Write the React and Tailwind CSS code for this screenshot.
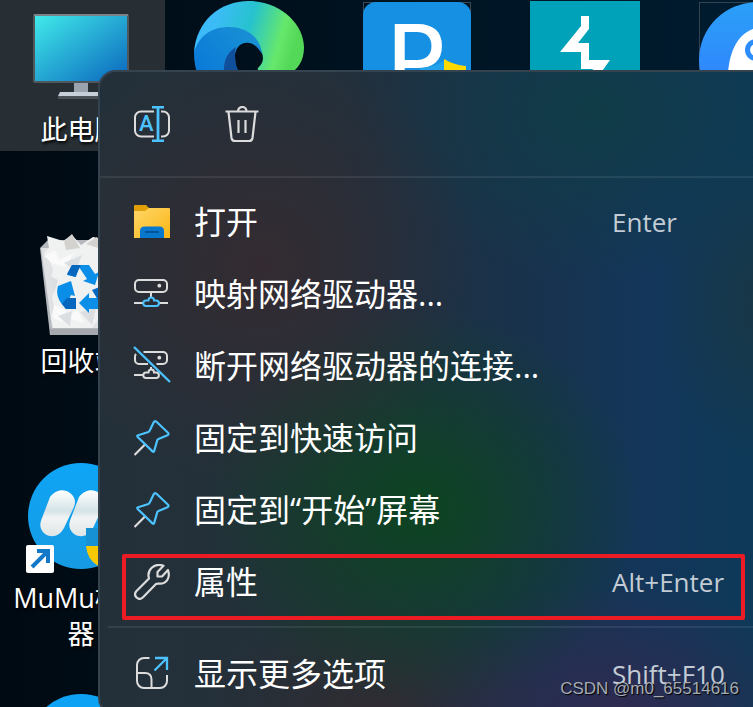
const light = "#dcdcdc";
const blue = "#4cc2ff";

const RenameIcon = () => (
  <svg viewBox="0 0 36 36" className="h-9 w-9" fill="none" strokeWidth="2">
    <path d="M20 5.5H7a6 6 0 0 0-6 6v13a6 6 0 0 0 6 6h13M27 5.5h2a6 6 0 0 1 6 6v13a6 6 0 0 1-6 6h-2" stroke={light} />
    <path d="M18 1h12M18 35h12M24 1v34" stroke={blue} strokeWidth="2.8" />
    <text x="5" y="25" fontSize="22" fill={blue} className="font-['Roboto',sans-serif] font-medium">A</text>
  </svg>
);

const TrashIcon = () => (
  <svg viewBox="0 0 36 36" className="h-9 w-9" fill="none" stroke={light} strokeWidth="2.2">
    <path d="M1.5 5.5h33M14 5.5c0-6 8.500-6 8.500 0M4.500 6l3 26c.3 2 1.500 3 3.500 3h14c2 0 3.200-1 3.500-3l3-26M14.500 14v13M21.500 14v13" />
  </svg>
);

const FolderIcon = () => (
  <svg viewBox="0 0 36 36" className="h-9 w-9">
    <defs>
      <linearGradient id="folder" x1="0" y1="0" x2="1" y2="1">
        <stop offset="0" stopColor="#ffd768" />
        <stop offset="1" stopColor="#fbb616" />
      </linearGradient>
    </defs>
    <path d="M0 2q0-1 1-1h11l3 3v6H0z" fill="#e09f08" />
    <path d="M0 7h11l4-3h20q1 0 1 1v29H0z" fill="url(#folder)" />
    <path d="M6 34v-7q0-4.500 4.500-4.500h15q4.500 0 4.500 4.500v7z" fill="#0878ce" />
    <path d="M11 28h14" stroke="#064a89" strokeWidth="1.6" />
  </svg>
);

const MapDriveIcon = ({ off }) => (
  <svg viewBox="0 0 36 36" className="h-9 w-9 overflow-visible" fill="none" stroke={light} strokeWidth="2">
    {off ? (
      <path d="M9.500 4H29a4 4 0 0 1 4 4v4a4 4 0 0 1-4 4h-6.500M2 6q-1 1-1 3v3a4 4 0 0 0 4 4h9M17 19v3M0 27h9" />
    ) : (
      <>
        <rect x="1" y="4" width="32" height="12" rx="4" />
        <path d="M17 16v6M0 27h9M25 27h9" />
      </>
    )}
    <circle cx="25.300" cy="9.700" r="1.900" fill={light} stroke="none" />
    <path
      d="M12 24.500h2.500c0-4 5.500-4 5.500 0h2.200c3.600 0 3.600 5.500 0 5.500H12c-3.600 0-3.600-5.500 0-5.500z"
      stroke={off ? light : blue}
      strokeWidth="2"
    />
    {off && <path d="M0-1l36 35" stroke={blue} strokeWidth="2.400" />}
  </svg>
);

const PinIcon = () => (
  <svg viewBox="0 0 36 36" className="h-9 w-9" fill="none" strokeWidth="2.2" strokeLinejoin="round">
    <path d="M11 24.500L.5 35" stroke={light} />
    <path
      d="M22.500 1.800L34 12.700q1.300 1.500-.5 2.500L24.500 19q-1 .4-1.300 1.400l-3 10.600q-.5 1.500-1.700.4L3.700 17q-1.200-1.200.4-1.700l9.600-3q1.300-.4 1.900-1.600l4-8.300q1-2 2.900-.6z"
      stroke={blue}
    />
  </svg>
);

const WrenchIcon = () => (
  <svg viewBox="0 0 36 36" className="h-9 w-9" fill="none" stroke={light} strokeWidth="2.2" strokeLinejoin="round">
    <path d="M29.500 1.800L23.500 8v4.500H28L34 6c2.500 7-1 13.700-8 13.700-1.500 0-2.700-.4-4 .3L9 33.300c-4.500 4.200-10.500-1.500-6.500-6.300L15 14.500C12.500 6 20-1.500 29.500 1.800z" />
  </svg>
);

const MoreIcon = () => (
  <svg viewBox="0 0 36 36" className="h-9 w-9" fill="none" strokeWidth="2">
    <path d="M15.500 2H10a7 7 0 0 0-7 7v16a7 7 0 0 0 7 7h16a7 7 0 0 0 7-7v-6M3 17h8q6.500 0 6.500 6.500V32" stroke={light} />
    <path d="M21 2h12v12M33 2L20.500 14.500" stroke={blue} strokeWidth="2.300" />
  </svg>
);

const ComputerArt = () => (
  <svg viewBox="0 0 162 104" className="block w-full">
    <defs>
      <linearGradient id="screen" x1="0" y1="0" x2="1" y2="1">
        <stop offset="0" stopColor="#40eaea" />
        <stop offset="1" stopColor="#0a66bd" />
      </linearGradient>
    </defs>
    <path d="M74 82h14v12H74z" fill="#9ba3ae" />
    <path d="M60 92h42l2 4H58z" fill="#c6ced7" />
    <path d="M58 96h46v3H58z" fill="#4b5158" />
    <rect x="33" y="14" width="96" height="69" rx="2" fill="#50575d" />
    <path d="M34 15h94" stroke="#a9b0b5" />
    <rect x="35" y="16" width="92" height="65" fill="url(#screen)" />
  </svg>
);

const RecycleArt = () => (
  <svg viewBox="0 0 162 107" className="block w-full">
    <path d="M40 20l8-8h66l8 8-10 87H50z" fill="#b4b8bd" />
    <path d="M41 20h80l-11 80H52z" fill="#dfe1e3" />
    <path d="M47 8l16 5 9-6 9 10 12-8 10 2 9 12-8 60-12 17H53l-2-12 3-9-2-10 3-10-4-9 2-9-5-11-4-5 5-5z" fill="#f0f1f1" />
    <path d="M64 13l8-7 8 14-14 2zM86 16l11-7 4 12z" fill="#d4d2cf" />
    <path d="M44 28l11-6 4 10 15-7-9 14-12-3zM54 77l12 5-4 12-9-4zM67 90l10-9 7 14z" fill="#fafafa" />
    <path d="M64 35l18-8-6 16zM50 48l8 4-4 14zM58 88l14-5-2 15zM80 84l16-4-4 17z" fill="#dcdfe2" />
    <path d="M50 101h62l-1 6H51z" fill="#a5a9ad" />
    <path d="M72 37h17l6 9 4-2-4 13-12-4 4-2-8-12-3 10-9-2z" fill="#0a8ee8" />
    <path d="M72 37h9l-6 12-8-3z" fill="#0766bd" />
    <path d="M58 58l13-5 4 15-4-1-3 7 8 2v5H66l-5-6c-5-8-4-13-3-17zM79 75l10-10v5h14v11H89v4z" fill="#0a8ee8" />
    <path d="M67 70h9v11H66l-4-5z" fill="#0766bd" />
    <path d="M92 62l10-4 4 10-8 4z" fill="#0766bd" />
  </svg>
);

const MumuArt = () => (
  <svg viewBox="0 0 162 110" className="block w-full overflow-visible">
    <defs>
      <linearGradient id="mumu" x1="0" y1="0" x2="0" y2="1">
        <stop offset="0" stopColor="#0ea5f6" />
        <stop offset="1" stopColor="#169ae2" />
      </linearGradient>
      <linearGradient id="pill" x1="0" y1="0" x2="0" y2="1">
        <stop offset="0" stopColor="#ffffff" />
        <stop offset="0.450" stopColor="#d4e3e7" />
        <stop offset="0.600" stopColor="#f2f4f4" />
        <stop offset="1" stopColor="#dfe5e6" />
      </linearGradient>
    </defs>
    <circle cx="81" cy="54" r="53" fill="url(#mumu)" />
    <path
      d="M50 35c5-7 14-9 20-4 6 4 6 11 3 16L64 66c-5 9-13 10-19 6-5-4-6-9-3-16zM79 35c5-7 14-9 20-4 6 4 6 11 3 16L93 66c-5 9-13 10-19 6-5-4-6-9-3-16z"
      fill="url(#pill)"
    />
    <path d="M86 66h28v18H86z" fill="#1691d3" />
    <path d="M86 84h28v20H98Q87 97 86 84z" fill="#f8c802" />
    <rect x="26" y="83" width="28" height="28" rx="2" fill="#fff" />
    <path d="M32 105l15-15M37 89h11v12" fill="none" stroke="#1478c8" strokeWidth="4" />
  </svg>
);

const EdgeArt = () => (
  <svg viewBox="0 0 110 110" className="block w-full">
    <defs>
      <linearGradient id="edgeTop" x1="0" y1="0" x2="1" y2="0.200">
        <stop offset="0" stopColor="#3db8ff" />
        <stop offset="0.250" stopColor="#3bbcf5" />
        <stop offset="0.550" stopColor="#26c2ce" />
        <stop offset="0.850" stopColor="#66e86c" />
        <stop offset="1" stopColor="#54d858" />
      </linearGradient>
      <linearGradient id="edgeLow" x1="0" y1="0.600" x2="0.700" y2="0">
        <stop offset="0" stopColor="#0878d9" />
        <stop offset="1" stopColor="#1990d4" />
      </linearGradient>
    </defs>
    <path d="M0 52C2 20 26 0 55 0c31 0 55 23 55 46 0 20-13 30-29 30-9 0-19-5-17-9 5-5 6-9 4-15C55 20 18 20 0 52z" fill="url(#edgeTop)" />
    <path d="M0 52C5 34 18 26 35 26c18 0 32 11 33 27C61 38 43 38 41 54c0 24 10 42 37 46C48 122 0 100 0 52z" fill="url(#edgeLow)" />
    <path d="M42 46C32 52 29 62 30 74l16-2c-4-6-5-11-5-18 0-3 0-5 1-8z" fill="#104f9b" />
  </svg>
);

const ParkingArt = () => (
  <svg viewBox="0 0 108 108" className="block w-full">
    <rect x=".5" y=".5" width="107" height="107" fill="none" stroke="#3b4a55" />
    <rect width="108" height="108" rx="13" fill="#1590e3" />
    <text x="22" y="95" fontSize="100" fill="#fff" className="font-['DejaVu_Sans',sans-serif]">P</text>
    <path d="M57 66q14-1 24-7v20H60z" fill="#22a2ea" />
    <path d="M81 57q10 6 22 7v13H81z" fill="#ffda00" />
  </svg>
);

const BoltArt = () => (
  <svg viewBox="0 0 110 110" className="block w-full">
    <rect width="110" height="110" fill="#00a2b9" />
    <path d="M51 15h8v13L48 42h11v17h21L70 73l-8-5H51V51H30l21-26z" fill="#fff" />
  </svg>
);

const WhaleArt = () => (
  <svg viewBox="0 0 116 116" className="block w-full">
    <defs>
      <linearGradient id="whale" x1="0" y1="0" x2="0" y2="1">
        <stop offset="0" stopColor="#2aa0f8" />
        <stop offset="1" stopColor="#3478ff" />
      </linearGradient>
    </defs>
    <rect x=".5" y=".5" width="115" height="115" fill="none" stroke="#34434f" />
    <circle cx="58" cy="58" r="58" fill="url(#whale)" />
    <path d="M29 72C31 42 44 26 64 25v60H28z" fill="#fff" />
    <circle cx="57" cy="48" r="8.500" fill="none" stroke="#2c8cfb" strokeWidth="5" />
  </svg>
);

const desktopIcons = [
  { label: "此电脑", Art: ComputerArt, place: "top-0 h-[151px] bg-[#272f34]" },
  { label: "回收站", Art: RecycleArt, place: "top-[228px]" },
  { label: "MuMu模拟器", Art: MumuArt, place: "top-[462px]" },
];

const topIcons = [
  { name: "edge", Art: EdgeArt, place: "left-[194px] top-px w-[110px]" },
  { name: "parking", Art: ParkingArt, place: "left-[363px] top-0.5 w-[108px]" },
  { name: "bolt", Art: BoltArt, place: "left-[530px] top-px w-[110px]" },
  { name: "whale", Art: WhaleArt, place: "left-[699px] top-0.5 w-[116px]" },
];

const menuItems = [
  { label: "打开", icon: <FolderIcon />, shortcut: "Enter" },
  { label: "映射网络驱动器...", icon: <MapDriveIcon /> },
  { label: "断开网络驱动器的连接...", icon: <MapDriveIcon off /> },
  { label: "固定到快速访问", icon: <PinIcon /> },
  { label: "固定到“开始”屏幕", icon: <PinIcon /> },
  { label: "属性", icon: <WrenchIcon />, shortcut: "Alt+Enter", marked: true },
];

const MenuItem = ({ label, icon, shortcut, marked }) => (
  <li className="relative">
    <button type="button" className="flex h-[72px] w-full items-center pl-[34px] text-left">
      {icon}
      <span className="ml-6 flex-1 text-[32px] leading-10 whitespace-nowrap text-white">{label}</span>
      {shortcut && (
        <span className="w-[155px] text-[26px] leading-8 whitespace-nowrap text-[#c3ccd4]">{shortcut}</span>
      )}
    </button>
    {marked && (
      <div className="pointer-events-none absolute inset-x-[22px] top-2 -bottom-0.5 rounded-xs border-4 border-[#ed1c24]" />
    )}
  </li>
);

const App = () => {
  return (
    <div className="relative h-screen overflow-hidden bg-linear-to-r from-[#000a12] to-[#001c30] font-['Open_Sans','Noto_Sans_CJK_SC',sans-serif]">
      {/* DESKTOP */}
      {desktopIcons.map(({ label, Art, place }) => (
        <div key={label} className={`absolute left-0 w-[165px] pr-[3px] ${place}`}>
          <Art />
          <p className="mx-auto mt-2 w-[144px] text-center text-[27px] leading-9 break-all text-white [text-shadow:1px_2px_3px_#000]">
            {label}
          </p>
        </div>
      ))}
      <div className="absolute top-[694px] left-7 h-[106px] w-[106px] rounded-full bg-[#0ea2f5]" />

      {topIcons.map(({ name, Art, place }) => (
        <div key={name} className={`absolute ${place}`}>
          <Art />
        </div>
      ))}

      {/* CONTEXT MENU */}
      <div className="absolute top-[70px] -right-4 left-[98px] rounded-[18px] border-2 border-[#35434e] bg-[#25303a] bg-[radial-gradient(ellipse_220px_220px_at_24%_30%,#3a292ebb,transparent),radial-gradient(ellipse_220px_200px_at_48%_68%,#0c4420,transparent),radial-gradient(ellipse_200px_130px_at_78%_100%,#302a50,transparent),radial-gradient(ellipse_220px_170px_at_74%_6%,#103c47,transparent),radial-gradient(ellipse_110px_160px_at_100%_36%,#1d353dbb,transparent),radial-gradient(ellipse_180px_120px_at_42%_100%,#342a2ecc,transparent),linear-gradient(to_right,#243039_0%,#22303b_35%,#18324d_65%,#13365a_82%,#0d3a58_100%)]">
        {/* QUICK ACTIONS */}
        <div className="flex h-[106px] items-center gap-[54px] border-b-2 border-[#ffffff14] pl-[34px]">
          <button type="button" aria-label="重命名">
            <RenameIcon />
          </button>
          <button type="button" aria-label="删除">
            <TrashIcon />
          </button>
        </div>

        <ul className="pt-2">
          {menuItems.map((item) => (
            <MenuItem key={item.label} {...item} />
          ))}
        </ul>

        <hr className="mt-2 mb-2.5 ml-2 border-t-2 border-[#ffffff14]" />

        <ul className="pb-1">
          <MenuItem label="显示更多选项" icon={<MoreIcon />} shortcut="Shift+F10" />
        </ul>
      </div>

      {/* WATERMARK */}
      <p className="absolute right-3.5 bottom-2 font-['Liberation_Sans',sans-serif] text-[17px] leading-5 text-[#a4abb3] [text-shadow:1px_1px_1px_#000]">
        CSDN @m0_65514616
      </p>
    </div>
  );
};

export default App;
